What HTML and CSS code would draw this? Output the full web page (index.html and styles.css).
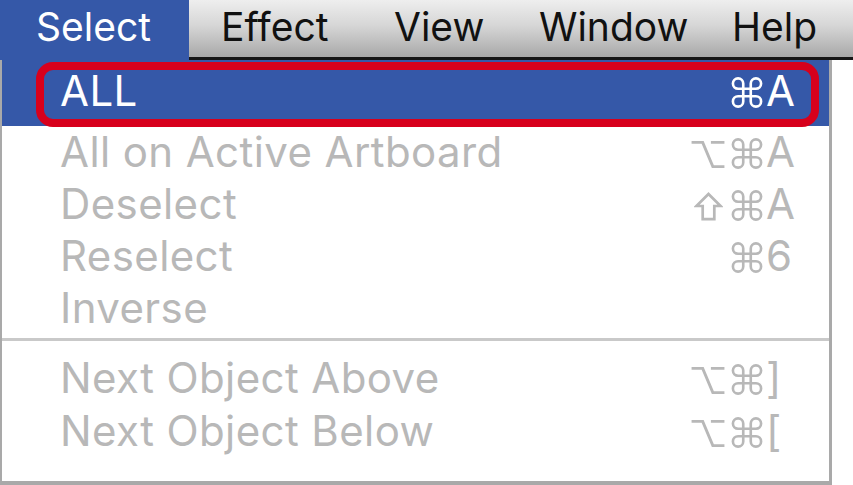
FILE: index.html
```html
<!DOCTYPE html>
<html lang="en">
<head>
    <meta charset="UTF-8">
    <title>Select menu</title>
    <link rel="stylesheet" href="styles.css">
</head>
<body>
    <svg class="defs" width="0" height="0">
        <defs>
            <symbol id="cmd" viewBox="-1.5 -1.5 33 33">
                <path d="M11 11 V5.5 A5.5 5.5 0 1 0 5.5 11 H24.5 A5.5 5.5 0 1 0 19 5.5 V24.5 A5.5 5.5 0 1 0 24.5 19 H5.5 A5.5 5.5 0 1 0 11 24.5 Z" fill="none" stroke="currentColor" stroke-width="2.8" stroke-linejoin="round"/>
            </symbol>
            <symbol id="opt" viewBox="0 0 34 30">
                <path d="M0 2.5 H11.5 L22 27.5 H34 M20 2.5 H34" fill="none" stroke="currentColor" stroke-width="3"/>
            </symbol>
            <symbol id="shift" viewBox="0 0 29 30">
                <path d="M14.5 2 L27 14.5 H20.5 V28 H8.5 V14.5 H2 Z" fill="none" stroke="currentColor" stroke-width="2.8" stroke-linejoin="miter"/>
            </symbol>
        </defs>
    </svg>

    <!-- menu bar -->
    <div class="menubar">
        <div class="menu-title current">Select</div>
        <div class="menu-rest">
            <div class="menu-title">Effect</div>
            <div class="menu-title">View</div>
            <div class="menu-title">Window</div>
            <div class="menu-title">Help</div>
        </div>
    </div>

    <!-- dropdown -->
    <div class="dropdown">
        <div class="item selected">
            <span class="label">ALL</span>
            <span class="keys">
                <span class="mod"></span>
                <span class="cmd"><svg class="glyph g-cmd"><use href="#cmd"/></svg></span>
                <span class="key">A</span>
            </span>
            <div class="focus-ring"></div>
        </div>
        <div class="item">
            <span class="label">All on Active Artboard</span>
            <span class="keys">
                <span class="mod"><svg class="glyph g-opt"><use href="#opt"/></svg></span>
                <span class="cmd"><svg class="glyph g-cmd"><use href="#cmd"/></svg></span>
                <span class="key">A</span>
            </span>
        </div>
        <div class="item">
            <span class="label">Deselect</span>
            <span class="keys">
                <span class="mod"><svg class="glyph g-shift"><use href="#shift"/></svg></span>
                <span class="cmd"><svg class="glyph g-cmd"><use href="#cmd"/></svg></span>
                <span class="key">A</span>
            </span>
        </div>
        <div class="item">
            <span class="label">Reselect</span>
            <span class="keys">
                <span class="mod"></span>
                <span class="cmd"><svg class="glyph g-cmd"><use href="#cmd"/></svg></span>
                <span class="key">6</span>
            </span>
        </div>
        <div class="item">
            <span class="label">Inverse</span>
        </div>

        <div class="separator"></div>

        <div class="item tall">
            <span class="label">Next Object Above</span>
            <span class="keys">
                <span class="mod"><svg class="glyph g-opt"><use href="#opt"/></svg></span>
                <span class="cmd"><svg class="glyph g-cmd"><use href="#cmd"/></svg></span>
                <span class="key">]</span>
            </span>
        </div>
        <div class="item tall">
            <span class="label">Next Object Below</span>
            <span class="keys">
                <span class="mod"><svg class="glyph g-opt"><use href="#opt"/></svg></span>
                <span class="cmd"><svg class="glyph g-cmd"><use href="#cmd"/></svg></span>
                <span class="key">[</span>
            </span>
        </div>
    </div>
</body>
</html>
```

FILE: styles.css
```css
body {
    margin: 0;
    width: 853px;
    height: 485px;
    overflow: hidden;
    background-color: #fff;
    font-family: Inter, "Noto Sans", "Noto Sans CJK JP", sans-serif;
}

.defs {
    position: absolute;
}

/* menu bar */
.menubar {
    display: flex;
    height: 60px;
}

.menu-title {
    font-size: 39px;
    line-height: 54px;
    color: #111;
}

.menu-title.current {
    width: 189px;
    box-sizing: border-box;
    padding-left: 36px;
    background-color: #3558a8;
    color: #fff;
}

.menu-rest {
    flex: 1;
    display: grid;
    grid-template-columns: 173px 145px 193px auto;
    padding-left: 32px;
    height: 57px;
    border-bottom: 3px solid #161616;
    background: linear-gradient(#eeeeee, #d6d6d6 45%, #a8a8a8);
}

/* dropdown */
.dropdown {
    width: 832px;
    box-sizing: border-box;
    border-left: 2px solid #a9a9a9;
    border-right: 3px solid #a9a9a9;
    border-bottom: 4px solid #a9a9a9;
    padding-bottom: 24px;
    font-size: 42px;
    color: #b8b8b8;
}

.item {
    display: flex;
    align-items: baseline;
    justify-content: space-between;
    height: 52px;
    line-height: 52px;
    padding: 0 32px 0 58px;
}

.item .label {
    letter-spacing: 0.4px;
}

.item.tall {
    height: 53px;
    line-height: 53px;
}

.item.selected {
    position: relative;
    padding-top: 5px;
    padding-bottom: 9px;
    background-color: #3558a8;
    color: #fff;
}

.focus-ring {
    position: absolute;
    top: 2px;
    left: 34px;
    right: 10px;
    height: 65px;
    box-sizing: border-box;
    border: 8px solid #d7001c;
    border-radius: 17px;
}

.separator {
    height: 3px;
    margin: 4px 0 10px;
    background-color: #c9c9c9;
}

.keys {
    display: flex;
    align-items: baseline;
}

.mod {
    width: 39px;
}

.cmd {
    width: 36px;
}

.key {
    width: 31px;
}

.glyph {
    vertical-align: -2px;
}

.g-cmd {
    width: 32px;
    height: 31px;
    margin-left: 1px;
}

.g-opt {
    width: 34px;
    height: 29px;
}

.g-shift {
    width: 29px;
    height: 29px;
    margin-left: 3px;
}
```
